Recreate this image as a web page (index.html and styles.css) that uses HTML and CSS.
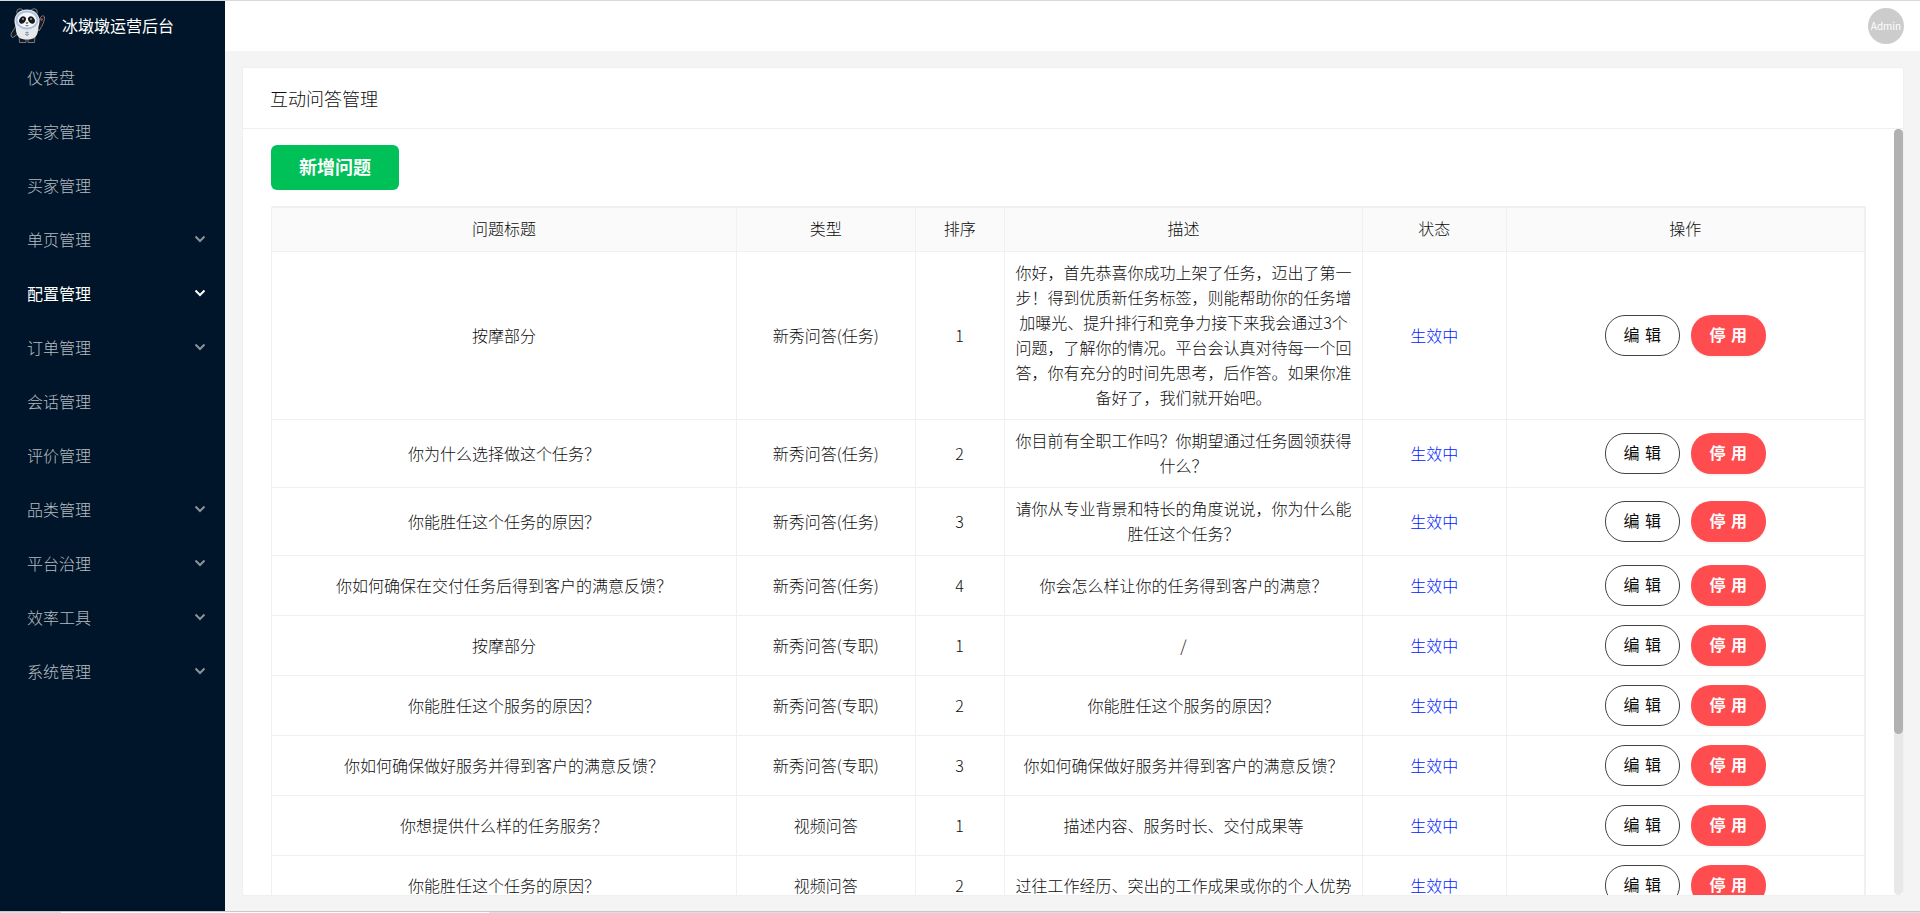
FILE: index.html
```
<!DOCTYPE html>
<html lang="zh-CN">
<head>
<meta charset="utf-8">
<title>冰墩墩运营后台</title>
<link rel="stylesheet" href="styles.css">
</head>
<body>
<svg class="defs" aria-hidden="true"><symbol id="down" viewBox="0 0 12 8"><path d="M1.5 1.5 6 6l4.500-4.500" fill="none" stroke="currentColor" stroke-width="2"/></symbol></svg>
<div class="app">
  <aside class="sidebar">
    <div class="brand">
      <svg class="logo" viewBox="0 0 36 36" aria-hidden="true">
        <path d="M6 18 1.500 25Q0 29 3 29.500L9 25z" fill="#17191f" stroke="#8d949c" stroke-width=".8"/>
        <path d="M27 18 30 10Q33 6 34.500 9 35 14 29 23z" fill="#17191f" stroke="#8d949c" stroke-width=".8"/>
        <path d="M31 10l2 1-1 2-2-1z" fill="#c4474d"/>
        <path d="M9 28h7v6.500h-6.500zM18 28h7l-.5 6.500H18z" fill="#17191f" stroke="#8d949c" stroke-width=".8"/>
        <circle cx="10" cy="4" r="3.300" fill="#17191f" stroke="#8d949c" stroke-width=".8"/>
        <circle cx="24" cy="4" r="3.300" fill="#17191f" stroke="#8d949c" stroke-width=".8"/>
        <path d="M17 1.500C25 1.500 30 7 29.500 14 29 18 28 19 28 23 27 29 24 31.500 17 31.500S7 29 6 23C6 19 5 18 4.500 14 4 7 9 1.500 17 1.500z" fill="#e6e8eb"/>
        <ellipse cx="17" cy="12" rx="10.500" ry="8.500" fill="#f4f6f8" stroke="#a9bfe2" stroke-width="1.800"/>
        <ellipse cx="12.500" cy="12" rx="3" ry="4" transform="rotate(35 12.500 12)" fill="#17191f"/>
        <ellipse cx="21.500" cy="12" rx="3" ry="4" transform="rotate(-35 21.500 12)" fill="#17191f"/>
        <circle cx="13" cy="11" r=".8" fill="#fff"/><circle cx="21" cy="11" r=".8" fill="#fff"/>
        <path d="M15.500 14.500h3L17 16zM15 17.500q2 1.500 4 0z" fill="#17191f"/>
        <path d="M17 23.500v4M15 26q2 3 4 0M15.500 24.500h3" fill="none" stroke="#8494a8"/>
      </svg>
      <span>冰墩墩运营后台</span>
    </div>
    <nav class="menu">
      <a href="#">仪表盘</a>
      <a href="#">卖家管理</a>
      <a href="#">买家管理</a>
      <a href="#">单页管理<svg class="arrow"><use href="#down"/></svg></a>
      <a href="#" class="active">配置管理<svg class="arrow"><use href="#down"/></svg></a>
      <a href="#">订单管理<svg class="arrow"><use href="#down"/></svg></a>
      <a href="#">会话管理</a>
      <a href="#">评价管理</a>
      <a href="#">品类管理<svg class="arrow"><use href="#down"/></svg></a>
      <a href="#">平台治理<svg class="arrow"><use href="#down"/></svg></a>
      <a href="#">效率工具<svg class="arrow"><use href="#down"/></svg></a>
      <a href="#">系统管理<svg class="arrow"><use href="#down"/></svg></a>
    </nav>
  </aside>
  <div class="page">
    <header class="topbar"><span class="avatar">Admin</span></header>
    <main class="main">
      <section class="card">
        <h1 class="card-title">互动问答管理</h1>
        <div class="card-body">
          <div class="content">
            <button class="add" type="button">新增问题</button>
            <table class="table">
              <colgroup><col class="c-title"><col class="c-type"><col class="c-sort"><col class="c-desc"><col class="c-state"><col class="c-action"></colgroup>
              <thead><tr><th>问题标题</th><th>类型</th><th>排序</th><th>描述</th><th>状态</th><th>操作</th></tr></thead>
              <tbody>
                <tr><td>按摩部分</td><td>新秀问答(任务)</td><td>1</td><td>你好，首先恭喜你成功上架了任务，迈出了第一步！得到优质新任务标签，则能帮助你的任务增加曝光、提升排行和竞争力接下来我会通过3个问题，了解你的情况。平台会认真对待每一个回答，你有充分的时间先思考，后作答。如果你准备好了，我们就开始吧。</td><td class="on">生效中</td><td><div class="ops"><button type="button" class="edit">编&#8196;辑</button><button type="button" class="stop">停&#8196;用</button></div></td></tr>
                <tr><td>你为什么选择做这个任务？</td><td>新秀问答(任务)</td><td>2</td><td>你目前有全职工作吗？你期望通过任务圆领获得什么？</td><td class="on">生效中</td><td><div class="ops"><button type="button" class="edit">编&#8196;辑</button><button type="button" class="stop">停&#8196;用</button></div></td></tr>
                <tr><td>你能胜任这个任务的原因？</td><td>新秀问答(任务)</td><td>3</td><td>请你从专业背景和特长的角度说说，你为什么能胜任这个任务？</td><td class="on">生效中</td><td><div class="ops"><button type="button" class="edit">编&#8196;辑</button><button type="button" class="stop">停&#8196;用</button></div></td></tr>
                <tr><td>你如何确保在交付任务后得到客户的满意反馈？</td><td>新秀问答(任务)</td><td>4</td><td>你会怎么样让你的任务得到客户的满意？</td><td class="on">生效中</td><td><div class="ops"><button type="button" class="edit">编&#8196;辑</button><button type="button" class="stop">停&#8196;用</button></div></td></tr>
                <tr><td>按摩部分</td><td>新秀问答(专职)</td><td>1</td><td>/</td><td class="on">生效中</td><td><div class="ops"><button type="button" class="edit">编&#8196;辑</button><button type="button" class="stop">停&#8196;用</button></div></td></tr>
                <tr><td>你能胜任这个服务的原因？</td><td>新秀问答(专职)</td><td>2</td><td>你能胜任这个服务的原因？</td><td class="on">生效中</td><td><div class="ops"><button type="button" class="edit">编&#8196;辑</button><button type="button" class="stop">停&#8196;用</button></div></td></tr>
                <tr><td>你如何确保做好服务并得到客户的满意反馈？</td><td>新秀问答(专职)</td><td>3</td><td>你如何确保做好服务并得到客户的满意反馈？</td><td class="on">生效中</td><td><div class="ops"><button type="button" class="edit">编&#8196;辑</button><button type="button" class="stop">停&#8196;用</button></div></td></tr>
                <tr><td>你想提供什么样的任务服务？</td><td>视频问答</td><td>1</td><td>描述内容、服务时长、交付成果等</td><td class="on">生效中</td><td><div class="ops"><button type="button" class="edit">编&#8196;辑</button><button type="button" class="stop">停&#8196;用</button></div></td></tr>
                <tr><td>你能胜任这个任务的原因？</td><td>视频问答</td><td>2</td><td>过往工作经历、突出的工作成果或你的个人优势</td><td class="on">生效中</td><td><div class="ops"><button type="button" class="edit">编&#8196;辑</button><button type="button" class="stop">停&#8196;用</button></div></td></tr>
              </tbody>
            </table>
          </div>
          <div class="track"><div class="thumb"></div></div>
        </div>
      </section>
    </main>
  </div>
</div>
<div class="taskbar"><div class="task"></div></div>
</body>
</html>
```
FILE: styles.css
```
* { box-sizing: border-box; }
body {
  margin: 0;
  height: 100vh;
  overflow: hidden;
  display: flex;
  flex-direction: column;
  border-top: 1px solid #d9d9d9;
  font: 300 16px/25px "Noto Sans CJK SC", sans-serif;
  color: #0d0d0d;
  background: #f4f4f4;
}
button { font: inherit; cursor: pointer; }
.defs { position: absolute; width: 0; height: 0; }
.app { flex: 1; min-height: 0; display: flex; }

.sidebar { flex: none; width: 225px; background: #001529; color: #fff; }
.brand { display: flex; align-items: center; gap: 16px; height: 49px; padding-left: 10px; font-weight: 400; }
.logo { width: 36px; height: 36px; }
.menu { display: flex; flex-direction: column; }
.menu a {
  display: flex;
  align-items: center;
  justify-content: space-between;
  height: 54px;
  padding: 0 19px 0 27px;
  color: rgba(255, 255, 255, .72);
  text-decoration: none;
}
.menu .active { color: #fff; font-weight: 400; }
.arrow { width: 12px; height: 8px; opacity: .75; }
.active .arrow { opacity: 1; }

.page { flex: 1; min-width: 0; display: flex; flex-direction: column; }
.topbar {
  flex: none;
  height: 50px;
  padding-right: 16px;
  display: flex;
  align-items: center;
  justify-content: flex-end;
  background: #fff;
}
.avatar {
  width: 36px;
  height: 36px;
  border-radius: 50%;
  background: #ccc;
  color: #fff;
  font-size: 10px;
  font-weight: 400;
  line-height: 36px;
  text-align: center;
}
.main { flex: 1; min-height: 0; padding: 16px 16px 15px 17px; display: flex; }
.card {
  flex: 1;
  min-width: 0;
  display: flex;
  flex-direction: column;
  border: 1px solid #f0f0f0;
  border-radius: 2px;
  background: #fff;
}
.card-title {
  flex: none;
  margin: 0;
  padding: 18px 28px 17px 27px;
  border-bottom: 1px solid #f0f0f0;
  font-size: 18px;
  font-weight: 300;
}
.card-body { flex: 1; min-height: 0; display: flex; }
.content { flex: 1; min-width: 0; overflow: hidden; padding: 16px 28px; }
.add {
  display: block;
  width: 128px;
  height: 45px;
  margin-bottom: 16px;
  padding: 0 0 2px;
  border: 0;
  border-radius: 6px;
  background: #00c058;
  color: #fff;
  font-size: 18px;
  font-weight: 700;
}
.table {
  width: 100%;
  table-layout: fixed;
  border-collapse: separate;
  border-spacing: 0;
  border: 1px solid #f0f0f0;
  border-bottom: 0;
  border-radius: 2px;
  text-align: center;
}
.c-title { width: 29.2%; }
.c-type { width: 11.2%; }
.c-sort { width: 5.6%; }
.c-desc { width: 22.5%; }
.c-state { width: 9%; }
.c-action { width: 22.5%; }
.table th, .table td {
  border-right: 1px solid #f0f0f0;
  border-bottom: 1px solid #f0f0f0;
  padding: 8px 10px 9px;
}
.table th { border-top: 1px solid #f0f0f0; padding: 8px 10px 10px; background: #fafafa; font-weight: 300; }
.table .on { color: #0019ff; }
.ops { display: flex; justify-content: center; align-items: center; gap: 11px; min-height: 42px; }
.edit, .stop { width: 75px; height: 41px; padding: 0 0 1px; border-radius: 20px; }
.edit { border: 1px solid #434343; background: #fff; color: #0d0d0d; font-weight: 400; }
.stop { border: 0; background: #ff4d4f; color: #fff; font-weight: 700; box-shadow: 0 2px 0 rgba(0, 0, 0, .04); }

.track { flex: none; width: 9px; border-radius: 5px; background: #e8e8e8; }
.thumb { height: 79%; border-radius: 5px; background: #b1b1b1; }

.taskbar { flex: none; height: 2px; padding-left: 61px; border-top: 1px solid #c8c8c8; background: #d3e0ea; }
.task { width: 428px; height: 1px; background: #fff; }
```
